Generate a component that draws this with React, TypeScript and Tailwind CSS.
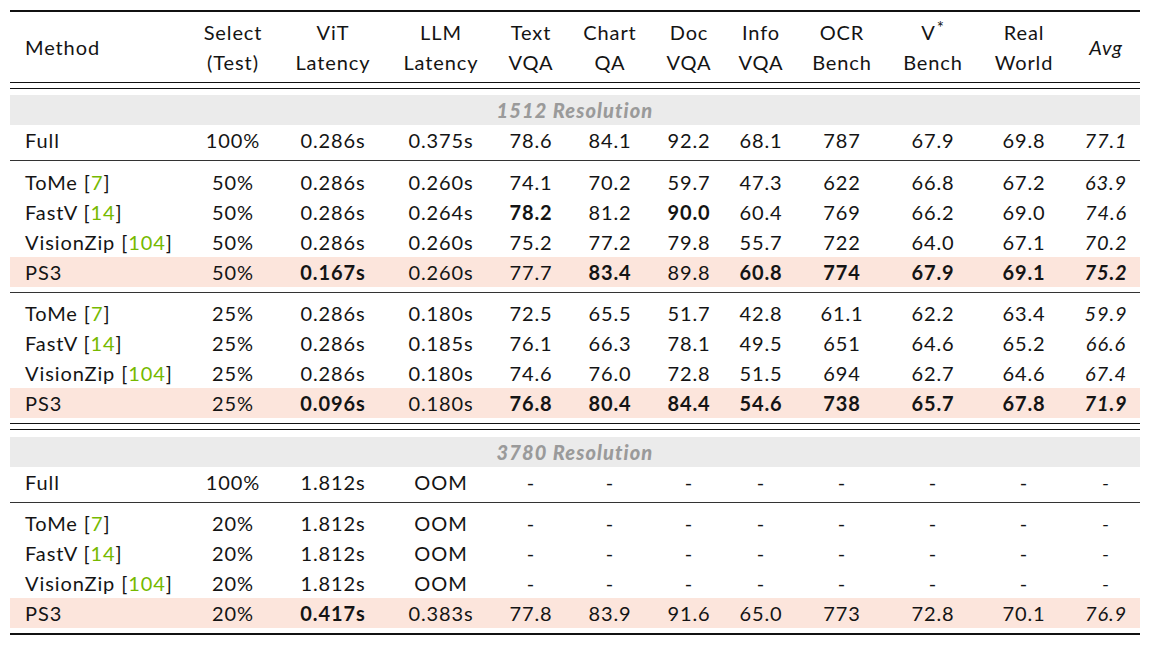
import React from "react";

const GRID =
  "grid grid-cols-[180px_86px_114px_102px_78px_80px_78px_66px_96px_86px_96px_68px]";

type RowData = { m: string; cite?: string; pink?: boolean; cells: string[] };

const sec1: RowData[] = [
  { m: "ToMe", cite: "7", cells: ["50%", "0.286s", "0.260s", "74.1", "70.2", "59.7", "47.3", "622", "66.8", "67.2", "63.9"] },
  { m: "FastV", cite: "14", cells: ["50%", "0.286s", "0.264s", "**78.2", "81.2", "**90.0", "60.4", "769", "66.2", "69.0", "74.6"] },
  { m: "VisionZip", cite: "104", cells: ["50%", "0.286s", "0.260s", "75.2", "77.2", "79.8", "55.7", "722", "64.0", "67.1", "70.2"] },
  { m: "PS3", pink: true, cells: ["50%", "**0.167s", "0.260s", "77.7", "**83.4", "89.8", "**60.8", "**774", "**67.9", "**69.1", "**75.2"] },
];
const sec2: RowData[] = [
  { m: "ToMe", cite: "7", cells: ["25%", "0.286s", "0.180s", "72.5", "65.5", "51.7", "42.8", "61.1", "62.2", "63.4", "59.9"] },
  { m: "FastV", cite: "14", cells: ["25%", "0.286s", "0.185s", "76.1", "66.3", "78.1", "49.5", "651", "64.6", "65.2", "66.6"] },
  { m: "VisionZip", cite: "104", cells: ["25%", "0.286s", "0.180s", "74.6", "76.0", "72.8", "51.5", "694", "62.7", "64.6", "67.4"] },
  { m: "PS3", pink: true, cells: ["25%", "**0.096s", "0.180s", "**76.8", "**80.4", "**84.4", "**54.6", "**738", "**65.7", "**67.8", "**71.9"] },
];
const dash = ["-", "-", "-", "-", "-", "-", "-", "-"];
const sec4: RowData[] = [
  { m: "ToMe", cite: "7", cells: ["20%", "1.812s", "OOM", ...dash] },
  { m: "FastV", cite: "14", cells: ["20%", "1.812s", "OOM", ...dash] },
  { m: "VisionZip", cite: "104", cells: ["20%", "1.812s", "OOM", ...dash] },
  { m: "PS3", pink: true, cells: ["20%", "**0.417s", "0.383s", "77.8", "83.9", "91.6", "65.0", "773", "72.8", "70.1", "76.9"] },
];

function Row({ r }: { r: RowData }) {
  return (
    <div className={`${GRID} h-[30px] items-center ${r.pink ? "bg-[#fce5dc]" : ""}`}>
      <div className="pl-[15px] whitespace-nowrap">
        {r.m}
        {r.cite && (
          <>
            {" "}[<span className="text-[#76b900]">{r.cite}</span>]
          </>
        )}
      </div>
      {r.cells.map((c, i) => {
        const bold = c.startsWith("**");
        const v = bold ? c.slice(2) : c;
        const last = i === r.cells.length - 1;
        return (
          <div
            key={i}
            className={`text-center whitespace-nowrap ${bold ? "font-bold" : ""} ${last ? "italic" : ""}`}
          >
            {v}
          </div>
        );
      })}
    </div>
  );
}

function Band({ t }: { t: string }) {
  return (
    <div className="h-[30px] bg-[#ebebeb] flex items-center justify-center font-black italic text-[#9a9a9a] tracking-[1.1px]">
      {t}
    </div>
  );
}

const Thin = () => <div className="h-[1px] bg-[#333]" />;
const Double = () => (
  <div className="flex flex-col gap-[5px]">
    <div className="h-[1px] bg-[#111]" />
    <div className="h-[1px] bg-[#111]" />
  </div>
);

const headers: [string, string][] = [
  ["Select", "(Test)"],
  ["ViT", "Latency"],
  ["LLM", "Latency"],
  ["Text", "VQA"],
  ["Chart", "QA"],
  ["Doc", "VQA"],
  ["Info", "VQA"],
  ["OCR", "Bench"],
  ["V*", "Bench"],
  ["Real", "World"],
];

export default function App() {
  return (
    <div
      className="w-[1149px] h-[649px] bg-white text-[#141414] text-[20px] leading-[30px] tracking-[0.9px]"
      style={{ fontFamily: "Lato, 'Noto Sans', sans-serif" }}
    >
      <div className="ml-[10px] w-[1130px] pt-[10px]">
        <div className="h-[2px] bg-[#111]" />
        <div className={`${GRID} pt-[5px] pb-[5px]`}>
          <div className="pl-[15px] flex items-center">Method</div>
          {headers.map(([a, b], i) => (
            <div key={i} className="text-center whitespace-nowrap">
              <div className="h-[30px]">
                {a === "V*" ? (
                  <>
                    V
                    <span className="text-[17px] leading-[0] relative top-[-6px] ml-[1px]">*</span>
                  </>
                ) : (
                  a
                )}
              </div>
              <div className="h-[30px]">{b}</div>
            </div>
          ))}
          <div className="italic text-center flex items-center justify-center">Avg</div>
        </div>
        <Double />
        <div className="pt-[6px]">
          <Band t="1512 Resolution" />
          <Row r={{ m: "Full", cells: ["100%", "0.286s", "0.375s", "78.6", "84.1", "92.2", "68.1", "787", "67.9", "69.8", "77.1"] }} />
        </div>
        <div className="h-[5px]" />
        <Thin />
        <div className="pt-[6px] pb-[5px]">
          {sec1.map((r, i) => (
            <Row key={i} r={r} />
          ))}
        </div>
        <Thin />
        <div className="pt-[5px] pb-[5px]">
          {sec2.map((r, i) => (
            <Row key={i} r={r} />
          ))}
        </div>
        <Double />
        <div className="pt-[7px]">
          <Band t="3780 Resolution" />
          <Row r={{ m: "Full", cells: ["100%", "1.812s", "OOM", ...dash] }} />
        </div>
        <div className="h-[5px]" />
        <Thin />
        <div className="pt-[5px] pb-[5px]">
          {sec4.map((r, i) => (
            <Row key={i} r={r} />
          ))}
        </div>
        <div className="h-[2px] bg-[#111]" />
      </div>
    </div>
  );
}
